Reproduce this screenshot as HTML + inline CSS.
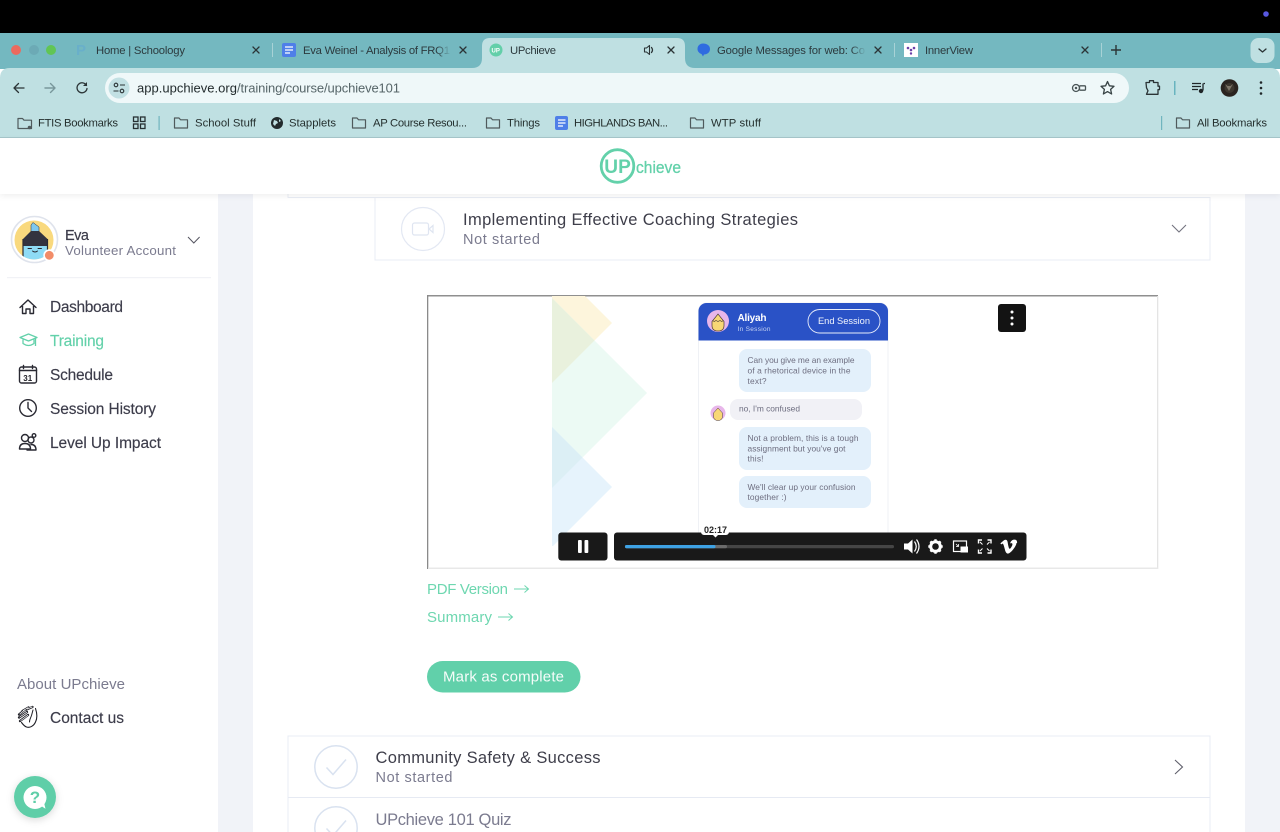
<!DOCTYPE html>
<html lang="en"><head><meta charset="utf-8"><title>UPchieve</title>
<style>
html,body{margin:0;padding:0;width:1280px;height:832px;overflow:hidden;background:#fff}
svg{display:block;position:absolute;left:0;top:0}
text{font-family:"Liberation Sans",sans-serif;white-space:pre}
.t{font-size:11.3px;fill:#2c3a3e}
.b{font-size:11.3px;fill:#25302f}
.n{font-size:15.5px;fill:#3c3c4a;stroke:#3c3c4a;stroke-width:.15px}
.g{fill:#7b7b8f}
.c{font-size:8.400px;fill:#6e6e80}
.ic{fill:none;stroke:#2b3436;stroke-width:1.300;stroke-linecap:round;stroke-linejoin:round}
.fo{fill:none;stroke:#4f5a5c;stroke-width:1.200;stroke-linejoin:round}
.k{fill:none;stroke:#2a2a33;stroke-width:1.400;stroke-linecap:round;stroke-linejoin:round}
</style></head><body>
<svg width="1280" height="832" viewBox="0 0 1280 832" xmlns="http://www.w3.org/2000/svg">
<defs>
<filter id="sh" x="-5%" y="-30%" width="110%" height="170%"><feDropShadow dx="0" dy="2" stdDeviation="3" flood-color="#000" flood-opacity=".06"/></filter>
<filter id="sh2" x="-40%" y="-40%" width="180%" height="180%"><feDropShadow dx="0" dy="2" stdDeviation="4" flood-color="#000" flood-opacity=".15"/></filter>
<clipPath id="vid"><rect x="552" y="296" width="200" height="250"/></clipPath>
<clipPath id="av1"><circle cx="34" cy="240" r="19.500"/></clipPath>
<linearGradient id="fa1" x1="0" x2="1"><stop offset="0" stop-color="#74b8c0" stop-opacity="0"/><stop offset="1" stop-color="#74b8c0"/></linearGradient>
</defs>

<!-- black top -->
<rect width="1280" height="33" fill="#000"/>
<circle cx="1266" cy="14" r="2.800" fill="#5858e0"/>

<!-- tab strip -->
<rect y="33" width="1280" height="36" fill="#74b8c0"/>
<circle cx="16" cy="50" r="5" fill="#ec6a5e"/>
<circle cx="34" cy="50" r="5" fill="#6caab5"/>
<circle cx="51" cy="50" r="5" fill="#61c554"/>

<!-- toolbar bg -->
<path d="M0 78Q0 68 10 68H1270Q1280 68 1280 78V138H0Z" fill="#bfe0e2"/>
<rect y="137" width="1280" height="1" fill="#a5c6ca"/>

<!-- active tab -->
<path d="M472 68Q482 68 482 58V46Q482 38 490 38H677Q685 38 685 46V58Q685 68 695 68Z" fill="#bfe0e2"/>

<!-- tab 1 -->
<text x="76" y="55" font-size="15" font-weight="700" fill="#69afca">P</text>
<text class="t" x="96" y="54" textLength="89">Home | Schoology</text>
<path class="ic" d="M253 47l6 6M259 47l-6 6"/>
<rect x="272" y="43" width="1" height="14" fill="#a8d2d6"/>
<!-- tab 2 -->
<rect x="282" y="43" width="14" height="14" rx="2" fill="#4f7fe8"/>
<path d="M285 47h8M285 50h8M285 53h5" stroke="#fff" stroke-width="1.300"/>
<text class="t" x="303" y="54" textLength="147">Eva Weinel - Analysis of FRQ1</text>
<rect x="436" y="42" width="15" height="16" fill="url(#fa1)"/>
<path class="ic" d="M460 47l6 6M466 47l-6 6"/>
<!-- tab 3 -->
<circle cx="496" cy="50" r="6.500" fill="#63cfa9"/>
<text x="491.500" y="52.500" font-size="6" font-weight="700" fill="#fff">UP</text>
<text class="t" x="510" y="54" textLength="46">UPchieve</text>
<path d="M644.500 48h2l3-2.500v9l-3-2.500h-2z" fill="none" stroke="#2b3436" stroke-width="1.100" stroke-linejoin="round"/>
<path d="M651.500 47.500q2 2.500 0 5" class="ic" stroke-width="1"/>
<path class="ic" d="M668 47l6 6M674 47l-6 6"/>
<!-- tab 4 -->
<path d="M703 43.500c4 0 7 2 7 5.500s-3 5.500-6 5.500l-1 2-1.500-2.500c-2.500-.8-4-2.700-4-5 0-3.500 2.500-5.500 5.500-5.500z" fill="#2f6be0"/>
<text class="t" x="717" y="54" textLength="148">Google Messages for web: Co</text>
<rect x="851" y="42" width="15" height="16" fill="url(#fa1)"/>
<path class="ic" d="M875 47l6 6M881 47l-6 6"/>
<rect x="894" y="43" width="1" height="14" fill="#a8d2d6"/>
<!-- tab 5 -->
<rect x="904" y="43" width="14" height="14" fill="#fff"/>
<g fill="#6a3fa8"><circle cx="908" cy="48" r="1.300"/><circle cx="914" cy="48" r="1.300"/><circle cx="911" cy="50" r="1.300"/><circle cx="911" cy="53.500" r="1.200"/></g>
<text class="t" x="925" y="54" textLength="48">InnerView</text>
<path class="ic" d="M1082 47l6 6M1088 47l-6 6"/>
<rect x="1101" y="43" width="1" height="14" fill="#a8d2d6"/>
<path d="M1116 45v10M1111 50h10" stroke="#2b3436" stroke-width="1.400"/>
<rect x="1250.500" y="38" width="24" height="25" rx="8" fill="#bfe0e2"/>
<path class="ic" d="M1259 49l3.500 3 3.500-3"/>

<!-- nav -->
<path class="ic" d="M24 88H14M18.500 83.500L14 88l4.500 4.500" stroke-width="1.500"/>
<path d="M45 88h10M50.500 83.500L55 88l-4.500 4.500" fill="none" stroke="#78979b" stroke-width="1.400" stroke-linecap="round" stroke-linejoin="round"/>
<path class="ic" d="M86.500 85.500a5 5 0 1 0 .5 3" stroke-width="1.500"/>
<path d="M87 82v4h-4z" fill="#2b3436"/>

<!-- address bar -->
<rect x="105" y="73" width="1024" height="30" rx="15" fill="#eff8f9"/>
<circle cx="119" cy="88" r="10.500" fill="#c2e0e3"/>
<g fill="none" stroke="#2b3436" stroke-width="1.100"><circle cx="116" cy="85" r="1.800"/><path d="M120 85h5M113.500 91h5"/><circle cx="122" cy="91" r="1.800"/></g>
<text x="137" y="92.500" font-size="13" fill="#222b2d" textLength="100">app.upchieve.org</text>
<text x="237" y="92.500" font-size="13" fill="#566568" textLength="163">/training/course/upchieve101</text>
<!-- key, star -->
<g fill="none" stroke="#4a5557" stroke-width="1.300"><circle cx="1076" cy="88" r="3.500"/><rect x="1079.500" y="85.800" width="6" height="4.400" rx="1"/><circle cx="1076" cy="88" r=".6"/></g>
<path d="M1107.500 81.500l1.900 4.300 4.600.5-3.400 3.100 1 4.600-4.100-2.400-4.100 2.400 1-4.600-3.400-3.100 4.600-.5z" fill="none" stroke="#384345" stroke-width="1.300" stroke-linejoin="round"/>
<!-- puzzle -->
<path class="ic" d="M1146 82.500h3.500v-1.800h4v1.800h4.500v3.700h1.500v3.400h-1.500v4.700h-11.500l1.500-3.500-1.500-3z" stroke-width="1.500" stroke="#1f2628"/>
<rect x="1174" y="81" width="1.500" height="14" fill="#68b4bf"/>
<!-- media -->
<path d="M1192 83.500h9M1192 86.500h9M1192 89.500h6" stroke="#1f2628" stroke-width="1.300"/>
<path d="M1203.500 83.500h1.500M1203 83.500v7" stroke="#1f2628" stroke-width="1.300"/>
<circle cx="1201" cy="91" r="2.200" fill="#1f2628"/>
<circle cx="1229.500" cy="88" r="8.800" fill="#2a2420"/>
<circle cx="1229.500" cy="88" r="5" fill="#3d372f"/>
<path d="M1225 84l4 7 4-7-2.500 2h-3z" fill="#7d7568"/>
<circle cx="1261" cy="82.500" r="1.300" fill="#1f2628"/><circle cx="1261" cy="88" r="1.300" fill="#1f2628"/><circle cx="1261" cy="93.500" r="1.300" fill="#1f2628"/>

<!-- bookmarks -->
<path class="fo" d="M18 118.500h4.500l1.500 1.700h7.500v8.300H18z"/><circle cx="29.500" cy="127.500" r="1.800" fill="#4f5a5c"/>
<text class="b" x="38" y="126.500" textLength="80">FTIS Bookmarks</text>
<g fill="none" stroke="#263032" stroke-width="1.300"><rect x="133.500" y="117" width="4.500" height="4.500"/><rect x="140.500" y="117" width="4.500" height="4.500"/><rect x="133.500" y="124" width="4.500" height="4.500"/><rect x="140.500" y="124" width="4.500" height="4.500"/></g>
<rect x="158.500" y="116" width="1.200" height="14" fill="#70b5bf"/>
<path class="fo" d="M174.500 118h4.500l1.500 1.800h7v8.200h-13z"/>
<text class="b" x="195" y="126.500" textLength="61">School Stuff</text>
<circle cx="277" cy="123" r="6" fill="#222b2d"/><path d="M274 120l3 1 1 2-2 1-1 2-2-2zM279 119l2 2-2 1z" fill="#bfe0e2"/>
<text class="b" x="289" y="126.500" textLength="47">Stapplets</text>
<path class="fo" d="M352.500 118h4.500l1.500 1.800h7v8.200h-13z"/>
<text class="b" x="373" y="126.500" textLength="94">AP Course Resou...</text>
<path class="fo" d="M486.500 118h4.500l1.500 1.800h7v8.200h-13z"/>
<text class="b" x="507" y="126.500" textLength="33">Things</text>
<rect x="555" y="116" width="13" height="14" rx="2" fill="#4f7fe8"/>
<path d="M558 120h7.500M558 123h7.500M558 126h5" stroke="#fff" stroke-width="1.200"/>
<text class="b" x="574" y="126.500" textLength="94">HIGHLANDS BAN...</text>
<path class="fo" d="M690.500 118h4.500l1.500 1.800h7v8.200h-13z"/>
<text class="b" x="711" y="126.500" textLength="50">WTP stuff</text>
<rect x="1161" y="116" width="1.200" height="14" fill="#70b5bf"/>
<path class="fo" d="M1176.500 118h4.500l1.500 1.800h7v8.200h-13z"/>
<text class="b" x="1197" y="126.500" textLength="70">All Bookmarks</text>

<!-- page bg -->
<rect y="138" width="1280" height="694" fill="#f1f3f8"/>
<rect x="253" y="194" width="992" height="638" fill="#fff"/>
<rect x="0" y="194" width="218" height="638" fill="#fff"/>

<!-- upper card -->
<rect x="288" y="197" width="922" height="1" fill="#e9ecf4"/>
<rect x="287.500" y="190" width="1" height="8" fill="#e9ecf4"/>
<rect x="375" y="197.500" width="835" height="62.500" fill="#fff" stroke="#e9ecf4" stroke-width="1"/>
<circle cx="423" cy="229" r="21.500" fill="none" stroke="#e3e8f3" stroke-width="1.200"/>
<rect x="412.500" y="223" width="16" height="12" rx="2" fill="none" stroke="#dfe5f1" stroke-width="1.200"/>
<path d="M429 229l4-3.500v7z" fill="none" stroke="#dfe5f1" stroke-width="1.200"/>
<text x="463" y="225" font-size="16.500" fill="#3e3e4a" textLength="335">Implementing Effective Coaching Strategies</text>
<text class="g" x="463" y="244" font-size="14.500" textLength="77">Not started</text>
<path d="M1172 225l7 7 7-7" fill="none" stroke="#73737f" stroke-width="1.100"/>

<!-- header -->
<rect y="138" width="1280" height="56" fill="#fff" filter="url(#sh)"/>
<circle cx="617.500" cy="166" r="16.300" fill="none" stroke="#63d1aa" stroke-width="2.800"/>
<text x="604.300" y="173" font-size="19" font-weight="700" fill="#63d1aa" textLength="26.500" lengthAdjust="spacingAndGlyphs">UP</text>
<text x="636" y="173" font-size="16.500" fill="#63d1aa" stroke="#63d1aa" stroke-width=".3" textLength="45" lengthAdjust="spacingAndGlyphs">chieve</text>

<!-- sidebar profile -->
<circle cx="34.500" cy="239.500" r="23" fill="#fff" stroke="#dfe3ec" stroke-width="1.600"/>
<circle cx="34" cy="240" r="19.500" fill="#f9d97e"/>
<g clip-path="url(#av1)">
<path d="M31 232v-7l2-2.500 6 4.500v5z" fill="#7fc8ee" stroke="#2a2a33" stroke-width=".5"/>
<path d="M31 231h8l8.500 8v8H23v-8z" fill="#33333f"/>
<rect x="23" y="246" width="24.500" height="16" fill="#8edbf5"/>
<path d="M23 239v23M47.500 239v23" stroke="#2a2a33" stroke-width="1.200"/>
</g>
<path d="M28 248.500h3.500M38 248.500h3.500M32.500 251q2.500 2 5 0" fill="none" stroke="#26262e" stroke-width=".9" stroke-linecap="round"/>
<circle cx="49.300" cy="255.300" r="6" fill="#fff"/><circle cx="49.300" cy="255.300" r="4.400" fill="#f28c68"/>
<text x="65" y="240" font-size="14.500" fill="#3c3c4a" stroke="#3c3c4a" stroke-width=".2" textLength="24">Eva</text>
<text class="g" x="65" y="255" font-size="13.300" textLength="111">Volunteer Account</text>
<path d="M188 237l5.800 6 5.800-6" fill="none" stroke="#555560" stroke-width="1"/>
<rect x="7" y="277" width="204" height="1.200" fill="#f1f2f6"/>

<!-- nav items -->
<path class="k" d="M20 307.500l8-7.500 8 7.500M22.500 306v7.500h3.500v-4.500h4v4.500h3.500V306" stroke="#1f1f26"/>
<text class="n" x="50" y="312" textLength="73">Dashboard</text>
<path d="M20 337.500l8.500-3.500 8.500 3.500-8.500 3.500zM23 339.500v4q5.500 4 11 0v-4M35.500 338v8" fill="none" stroke="#63d1aa" stroke-width="1.300" stroke-linejoin="round"/>
<text class="n" x="50" y="346" textLength="54" style="fill:#63d1aa;stroke:#63d1aa">Training</text>
<rect x="19.500" y="367" width="17" height="16" rx="2" class="k" stroke="#1f1f26"/>
<path d="M19.500 370.500h17M23.500 365.500v3M32.500 365.500v3" class="k" stroke="#1f1f26"/>
<text x="23.300" y="381" font-size="8" font-weight="700" fill="#1f1f26">31</text>
<text class="n" x="50" y="380" textLength="63">Schedule</text>
<circle cx="28" cy="408" r="8.300" class="k" stroke="#1f1f26"/>
<path class="k" d="M28 402.500v5.500l3.500 3.500" stroke="#1f1f26"/>
<text class="n" x="50" y="414" textLength="106">Session History</text>
<g class="k" stroke="#1f1f26" stroke-width="1.200"><circle cx="25" cy="438" r="3.500"/><circle cx="31" cy="440" r="3"/><path d="M19.500 449q0-5.500 5.500-5.500t5.500 5.500zM27 450h9q0-5.500-5-5.500"/><circle cx="34" cy="435.500" r="1.800"/></g>
<text class="n" x="50" y="448" textLength="111">Level Up Impact</text>

<text class="g" x="17" y="689" font-size="15" textLength="108">About UPchieve</text>
<g fill="none" stroke="#1f1f26" stroke-linecap="round" stroke-linejoin="round">
<path d="M35.500 708.500c1.500 4.500 2 9.500 0 13.500-2 4.500-6 6-9 5-2-.7-3.500-2.500-5-4.500" stroke-width="1.100"/>
<path d="M33 710l-1.500 5.500-1 2.500q-1 2-1 4" stroke-width="1"/>
<path d="M19 717.500l8-5.500M20 721l8-6M19 714.500l6-5M22.500 711l6-3.500M26.500 709.500l6-2.500" stroke-width="2.300"/>
<path d="M19.800 717l7-4.800M20.800 720.500l7-5.200M19.800 714l5-4.200M23.200 710.600l5-3M27.200 709.100l5-2.100" stroke="#fff" stroke-width=".7"/>
</g>
<text class="n" x="50" y="723" textLength="74">Contact us</text>

<!-- help -->
<circle cx="35" cy="797" r="21" fill="#5fcea8" filter="url(#sh2)"/>
<circle cx="35" cy="797.500" r="11.500" fill="#fff"/>
<path d="M38 804l7.500 4.800-2-8z" fill="#fff"/>
<text x="29.800" y="803.200" font-size="17" font-weight="700" fill="#5fcea8">?</text>

<!-- video frame -->
<rect x="428" y="296" width="729" height="272" fill="#fff"/>
<rect x="427" y="295" width="731" height="1.500" fill="#8f8f8f"/>
<rect x="427" y="295" width="1.300" height="274" fill="#8a8a8a"/>
<rect x="1157" y="296" width="1.300" height="273" fill="#e4e4e4"/>
<rect x="428" y="567.500" width="730" height="1.500" fill="#e8e8e8"/>

<g clip-path="url(#vid)">
<polygon points="552,263 612,323 552,383" fill="#fdf5dc"/>
<polygon points="552,298 647,393 552,488" fill="#ecfaf4"/>
<polygon points="552,298 594.500,340.500 552,383" fill="#e9f1dd"/>
<polygon points="552,427 612,487 552,547" fill="#e6f3fc"/>
<polygon points="552,427 582.500,457.500 552,488" fill="#dceff5"/>
</g>

<!-- chat card -->
<path d="M698.500 560V311a8 8 0 0 1 8-8H880a8 8 0 0 1 8 8V560z" fill="#fff" stroke="#eceef3" stroke-width=".8"/>
<path d="M698.500 340.500V311a8 8 0 0 1 8-8H880a8 8 0 0 1 8 8v29.500z" fill="#2a52c6"/>
<circle cx="718" cy="321" r="11" fill="#e8b6ea"/>
<path d="M712 325.500v-4l6-7.500 6 7.500v4q0 5.500-6 5.500t-6-5.500z" fill="#f8d775" stroke="#4b3a38" stroke-width=".7"/>
<path d="M712.500 320.500l1.800 1 1.700-1 2 1 2-1 1.700 1 1.800-1" fill="none" stroke="#4b3a38" stroke-width=".6"/>
<text x="737.500" y="321" font-size="10" font-weight="700" fill="#fff" textLength="29">Aliyah</text>
<text x="737.500" y="331" font-size="6.500" fill="#c5d2f2" textLength="33">In Session</text>
<rect x="808" y="309.500" width="72" height="23.500" rx="11.700" fill="none" stroke="#e8edfb" stroke-width=".9"/>
<text x="818" y="324" font-size="9.300" fill="#f2f5fd" textLength="52">End Session</text>

<rect x="739" y="349" width="132" height="43" rx="8" fill="#e3f0fb"/>
<text class="c" x="747.500" y="363" textLength="107">Can you give me an example</text>
<text class="c" x="747.500" y="373.500" textLength="103">of a rhetorical device in the</text>
<text class="c" x="747.500" y="384" textLength="19">text?</text>
<rect x="730" y="399" width="132" height="21" rx="8" fill="#f1f1f6"/>
<text class="c" x="739" y="411.500" textLength="61">no, I'm confused</text>
<circle cx="718" cy="413" r="7.500" fill="#e8b6ea"/>
<path d="M713.500 416v-3l4.500-5 4.500 5v3q0 4.500-4.500 4.500t-4.500-4.500z" fill="#f8d775" stroke="#4b3a38" stroke-width=".5"/>
<rect x="739" y="427" width="132" height="43" rx="8" fill="#e3f0fb"/>
<text class="c" x="747.500" y="441" textLength="111">Not a problem, this is a tough</text>
<text class="c" x="747.500" y="451.500" textLength="98">assignment but you've got</text>
<text class="c" x="747.500" y="461.500" textLength="16">this!</text>
<rect x="739" y="476" width="132" height="32" rx="8" fill="#e3f0fb"/>
<text class="c" x="747.500" y="490" textLength="108">We'll clear up your confusion</text>
<text class="c" x="747.500" y="500" textLength="39">together :)</text>

<!-- kebab -->
<rect x="998" y="304" width="28" height="28" rx="3" fill="#131313"/>
<circle cx="1012" cy="312" r="1.500" fill="#fff"/><circle cx="1012" cy="318" r="1.500" fill="#fff"/><circle cx="1012" cy="324" r="1.500" fill="#fff"/>

<!-- player -->
<rect x="558.300" y="532.500" width="49.200" height="28" rx="3" fill="#191919"/>
<rect x="578" y="540" width="3.800" height="13" rx="1" fill="#fff"/><rect x="584.500" y="540" width="3.800" height="13" rx="1" fill="#fff"/>
<rect x="614" y="532.500" width="412.500" height="28" rx="3" fill="#191919"/>
<rect x="625" y="545" width="269" height="3.200" rx="1.600" fill="#454545"/>
<rect x="625" y="545" width="102" height="3.200" rx="1.600" fill="#6b6b6b"/>
<rect x="625" y="545" width="90.500" height="3.200" rx="1.600" fill="#3ea2e4"/>
<path d="M704 523h22a3 3 0 0 1 3 3v6a3 3 0 0 1-3 3h-8l-2.500 2.500L713 535h-9a3 3 0 0 1-3-3v-6a3 3 0 0 1 3-3z" fill="#fff"/>
<text x="704" y="533" font-size="9" font-weight="700" fill="#222" textLength="23">02:17</text>
<path d="M904 543.500h4l4.500-4v14l-4.500-4h-4z" fill="#fff"/>
<path d="M914.500 541.500q3.500 5 0 10M916.500 539.500q5 7 0 14" fill="none" stroke="#fff" stroke-width="1.200"/>
<circle cx="935.500" cy="546.500" r="4.800" fill="none" stroke="#fff" stroke-width="3"/>
<path d="M935.500 539.300v14.400M928.300 546.500h14.400M930.400 541.400l10.200 10.200M940.600 541.400l-10.200 10.200" stroke="#fff" stroke-width="2.400" stroke-dasharray="2.400 9.600"/>
<rect x="953.500" y="541" width="13" height="10.500" fill="none" stroke="#fff" stroke-width="1.200"/>
<rect x="960.500" y="546.500" width="7.500" height="6" fill="#fff"/>
<path d="M956 544l2.500 2.500M958.500 544v2.500H956" stroke="#fff" stroke-width=".8" fill="none"/>
<path d="M978.500 543.500v-3.500h3.500M987.500 540h3.500v3.500M991 549.500v3.500h-3.500M982 553h-3.500v-3.500" fill="none" stroke="#fff" stroke-width="1.400"/>
<path d="M980 542l2.500 2.500M989.500 542L987 544.500M989.500 551L987 548.500M980 551l2.500-2.500" stroke="#fff" stroke-width="1"/>
<path d="M1016.500 543c-.1 1.600-1.200 3.700-3.300 6.400-2.200 2.800-4 4.200-5.500 4.200-1 0-1.700-.9-2.400-2.600l-1.300-4.800c-.5-1.700-1-2.600-1.500-2.600-.1 0-.5.300-1.300.8l-.8-1 2.400-2.100c1.100-1 1.900-1.400 2.500-1.500 1.300-.1 2.100.8 2.400 2.700.3 2 .6 3.300.7 3.800.4 1.700.8 2.500 1.300 2.500.4 0 .9-.6 1.600-1.700.7-1.100 1.100-2 1.100-2.500.1-1-.3-1.500-1.100-1.500-.4 0-.8.100-1.200.3.800-2.600 2.300-3.900 4.600-3.800 1.700.1 2.500 1.200 2.400 3.400z" fill="#fff"/>

<!-- links -->
<text x="427" y="594" font-size="15" fill="#6ed7b0" textLength="81">PDF Version</text>
<path d="M514 589h14.500M524.500 585.500l4 3.500-4 3.500" fill="none" stroke="#6ed7b0" stroke-width="1"/>
<text x="427" y="622" font-size="15" fill="#6ed7b0" textLength="65">Summary</text>
<path d="M498 617h14.500M508.500 613.500l4 3.500-4 3.500" fill="none" stroke="#6ed7b0" stroke-width="1"/>
<rect x="427" y="661" width="153.500" height="31.500" rx="15.700" fill="#61d0aa"/>
<text x="443" y="681.500" font-size="15" fill="#f4fcf9" textLength="121">Mark as complete</text>

<!-- lower rows -->
<rect x="288" y="736" width="922" height="110" fill="#fff" stroke="#e9ecf4" stroke-width="1"/>
<rect x="288" y="797" width="922" height="1" fill="#e6eaf3"/>
<circle cx="336" cy="767" r="21.200" fill="none" stroke="#d9e2f0" stroke-width="1.500"/>
<path d="M326.500 767.500l6.500 7 13-15" fill="none" stroke="#d9e2f0" stroke-width="1.500"/>
<text x="375.500" y="763" font-size="16.500" fill="#3e3e4a" textLength="225">Community Safety &amp; Success</text>
<text class="g" x="375.500" y="782" font-size="14.500" textLength="77">Not started</text>
<path d="M1175 760l7.500 7-7.500 7" fill="none" stroke="#5f5f6b" stroke-width="1.100"/>
<circle cx="336" cy="828" r="21.200" fill="none" stroke="#d9e2f0" stroke-width="1.500"/>
<path d="M326.500 828.500l6.500 7 13-15" fill="none" stroke="#d9e2f0" stroke-width="1.500"/>
<text class="g" x="375.500" y="825" font-size="16.500" textLength="136">UPchieve 101 Quiz</text>
</svg>
</body></html>
